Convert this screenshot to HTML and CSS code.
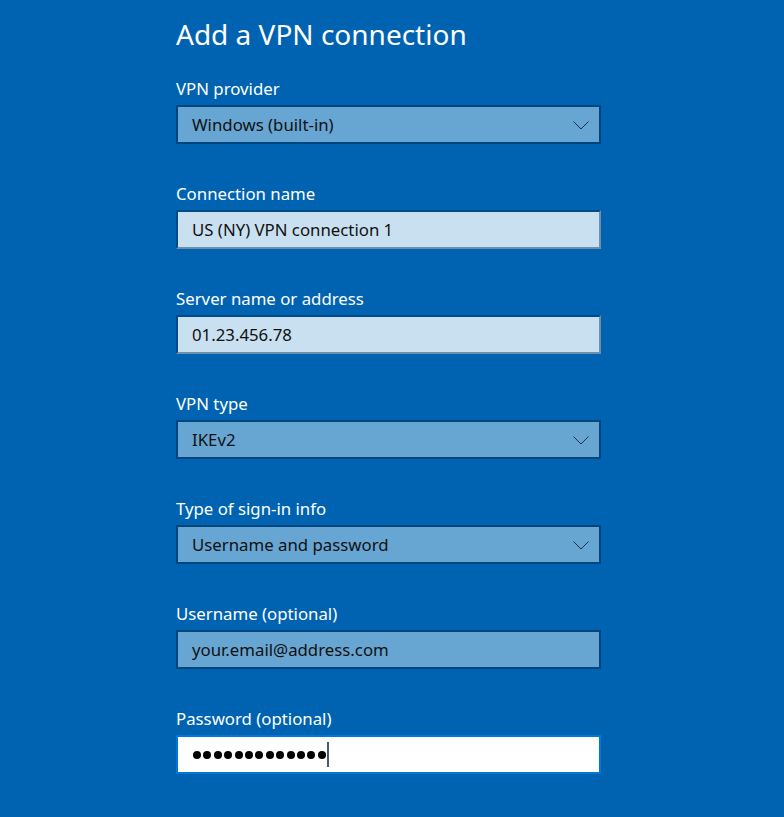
FILE: index.html
```html
<!DOCTYPE html>
<html lang="en">
<head>
    <meta charset="UTF-8">
    <meta name="viewport" content="width=device-width, initial-scale=1.0">
    <title>Add a VPN connection</title>
    <link rel="stylesheet" href="styles.css">
</head>
<body>
    <div class="panel">
        <h1>Add a VPN connection</h1>

        <div class="field">
            <div class="label">VPN provider</div>
            <div class="box dropdown">
                <span class="value">Windows (built-in)</span>
                <svg class="chevron" width="16" height="9" viewBox="0 0 16 9"><path d="M0.5 0.5 L8 8 L15.5 0.5" fill="none" stroke="#22303d" stroke-width="1"/></svg>
            </div>
        </div>

        <div class="field">
            <div class="label">Connection name</div>
            <div class="box text">
                <span class="value">US (NY) VPN connection 1</span>
            </div>
        </div>

        <div class="field">
            <div class="label">Server name or address</div>
            <div class="box text">
                <span class="value">01.23.456.78</span>
            </div>
        </div>

        <div class="field">
            <div class="label">VPN type</div>
            <div class="box dropdown">
                <span class="value">IKEv2</span>
                <svg class="chevron" width="16" height="9" viewBox="0 0 16 9"><path d="M0.5 0.5 L8 8 L15.5 0.5" fill="none" stroke="#22303d" stroke-width="1"/></svg>
            </div>
        </div>

        <div class="field">
            <div class="label">Type of sign-in info</div>
            <div class="box dropdown">
                <span class="value">Username and password</span>
                <svg class="chevron" width="16" height="9" viewBox="0 0 16 9"><path d="M0.5 0.5 L8 8 L15.5 0.5" fill="none" stroke="#22303d" stroke-width="1"/></svg>
            </div>
        </div>

        <div class="field">
            <div class="label">Username (optional)</div>
            <div class="box dropdown">
                <span class="value">your.email@address.com</span>
            </div>
        </div>

        <div class="field">
            <div class="label">Password (optional)</div>
            <div class="box password">
                <span class="dots">
                    <i></i><i></i><i></i><i></i><i></i><i></i><i></i><i></i><i></i><i></i><i></i><i></i><i></i>
                </span>
                <span class="caret"></span>
            </div>
        </div>
    </div>
</body>
</html>
```

FILE: styles.css
```css
html, body {
    margin: 0;
    padding: 0;
}
body {
    background-color: #0063b1;
    font-family: "Noto Sans", "Open Sans", sans-serif;
    color: white;
    height: 817px;
    overflow: hidden;
}
.panel {
    width: 425px;
    margin-left: 176px;
    padding-top: 14px;
}
h1 {
    font-size: 28px;
    font-weight: 400;
    line-height: 40px;
    margin: 0 0 24px 0;
}
.field {
    margin-bottom: 39px;
}
.label {
    font-size: 16.8px;
    line-height: 22px;
    margin-bottom: 5px;
}
.box {
    box-sizing: border-box;
    height: 39px;
    border: 2px solid #00457e;
    display: flex;
    align-items: center;
    padding: 0 10px 0 14px;
    color: #111;
    font-size: 16.8px;
}
.dropdown {
    background-color: #67a6d3;
}
.text {
    background-color: #c9e0f0;
    border-color: #004a87 #6d8fae #6d8fae #004a87;
}
.value {
    flex: 1;
}
.chevron {
    flex: none;
    margin-top: 1px;
}
.password {
    background-color: white;
    border-color: #0078d7;
    padding-left: 15px;
}
.dots {
    display: flex;
    gap: 2.4px;
}
.dots i {
    width: 8px;
    height: 8px;
    border-radius: 50%;
    background-color: #000;
}
.caret {
    width: 2px;
    height: 25px;
    background-color: #4a5a6a;
    margin-left: 1px;
}
```
